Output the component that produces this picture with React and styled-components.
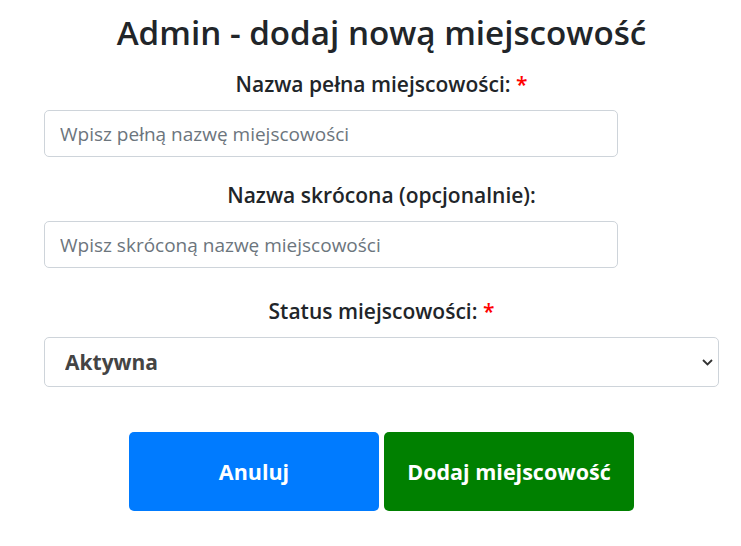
import React from "react";
import styled, { createGlobalStyle } from "styled-components";

const Global = createGlobalStyle`
  html, body { margin: 0; padding: 0; background: #fff; }
  body { font-family: "Open Sans", "Noto Sans", sans-serif; color: #212529; }
  * { box-sizing: border-box; }
`;

const Form = styled.form`
  width: 675px;
  margin: 0 0 0 44px;
  padding-top: 13px;
`;

const Title = styled.h1`
  margin: 0 0 19px;
  font-size: 33.2px;
  line-height: 40px;
  font-weight: 600;
  text-align: center;
  color: #212529;
`;

const Field = styled.div`
  margin-top: ${(p) => p.$top || 0}px;
`;

const Label = styled.label`
  display: block;
  margin-bottom: 14px;
  font-size: 21px;
  line-height: 24px;
  font-weight: 600;
  text-align: center;
  color: #212529;
`;

const Req = styled.span`
  color: #ff0000;
`;

const Input = styled.input`
  display: block;
  width: 574px;
  height: 47px;
  padding: 0 15px;
  border: 1px solid #ced4da;
  border-radius: 5px;
  font-family: inherit;
  font-size: 19px;
  color: #495057;
  background: #fff;
  outline: none;
  &::placeholder { color: #6c757d; opacity: 1; }
`;

const SelectWrap = styled.div`
  position: relative;
  width: 675px;
`;

const Select = styled.select`
  display: block;
  width: 100%;
  height: 50px;
  padding: 0 40px 0 20px;
  border: 1px solid #ced4da;
  border-radius: 5px;
  font-family: inherit;
  font-size: 21px;
  font-weight: 700;
  color: #444;
  background: #fff;
  appearance: none;
  outline: none;
`;

const Chevron = styled.svg`
  position: absolute;
  right: 6px;
  top: 50%;
  margin-top: -3px;
  width: 11px;
  height: 7px;
  pointer-events: none;
`;

const Buttons = styled.div`
  display: flex;
  justify-content: center;
  gap: 5px;
  margin-top: 45px;
`;

const Button = styled.button`
  width: 250px;
  height: 79px;
  border: none;
  border-radius: 5px;
  font-family: inherit;
  font-size: 21.5px;
  font-weight: 700;
  color: #fff;
  background: ${(p) => (p.$variant === "success" ? "#008000" : "#007bff")};
  cursor: pointer;
`;

export default function App() {
  return (
    <>
      <Global />
      <Form onSubmit={(e) => e.preventDefault()}>
        <Title>Admin - dodaj nową miejscowość</Title>
        <Field>
          <Label>
            Nazwa pełna miejscowości: <Req>*</Req>
          </Label>
          <Input placeholder="Wpisz pełną nazwę miejscowości" />
        </Field>
        <Field $top={26}>
          <Label>Nazwa skrócona (opcjonalnie):</Label>
          <Input placeholder="Wpisz skróconą nazwę miejscowości" />
        </Field>
        <Field $top={31}>
          <Label>
            Status miejscowości: <Req>*</Req>
          </Label>
          <SelectWrap>
            <Select defaultValue="aktywna">
              <option value="aktywna">Aktywna</option>
              <option value="nieaktywna">Nieaktywna</option>
            </Select>
            <Chevron viewBox="0 0 11 7">
              <path d="M1 1l4.5 4.5L10 1" fill="none" stroke="#333" strokeWidth="1.8" />
            </Chevron>
          </SelectWrap>
        </Field>
        <Buttons>
          <Button type="button" $variant="primary">Anuluj</Button>
          <Button type="submit" $variant="success">Dodaj miejscowość</Button>
        </Buttons>
      </Form>
    </>
  );
}
